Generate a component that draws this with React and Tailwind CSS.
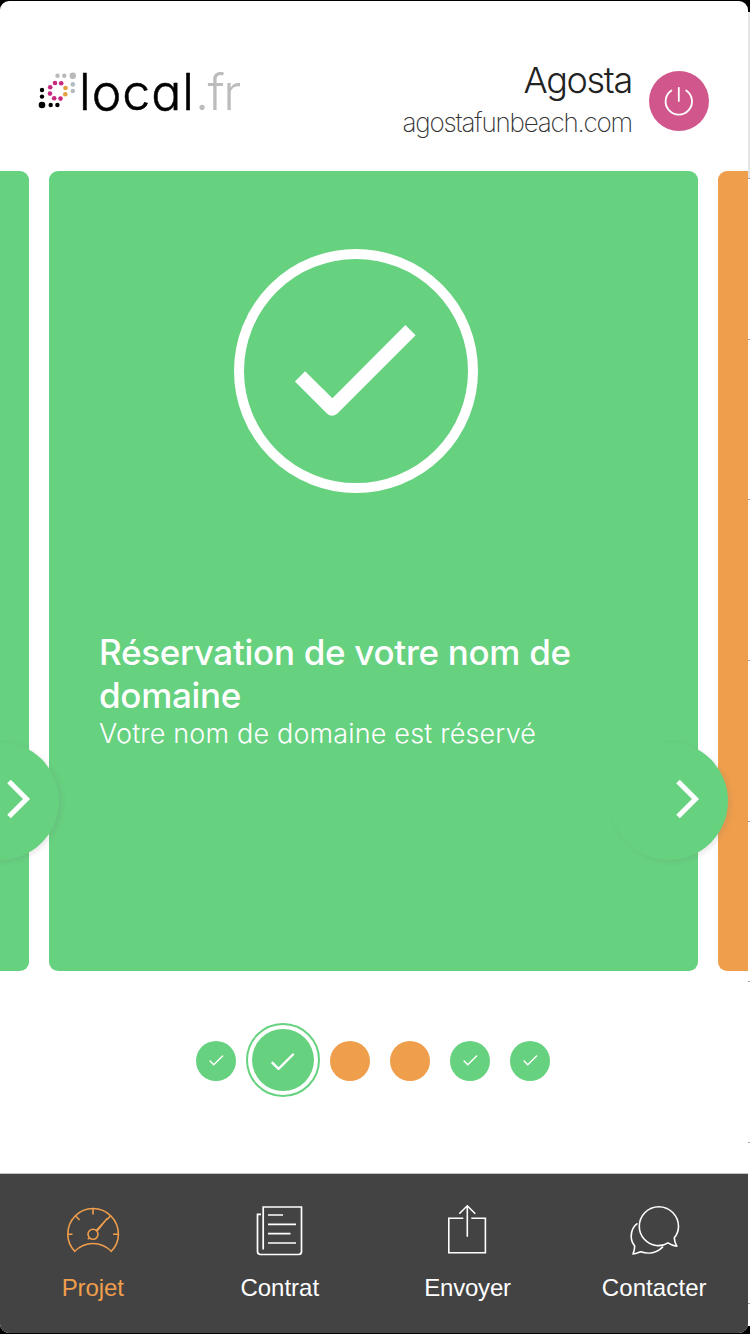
import React, { useState } from 'react';

const steps = [
  { id: 1, done: true },
  { id: 2, done: true },
  { id: 3, done: false },
  { id: 4, done: false },
  { id: 5, done: true },
  { id: 6, done: true },
];

const logoDots = [
  { x: 57.5, y: 75.7, r: 2.2, color: '#b9b9b9' },
  { x: 64.3, y: 75.7, r: 2.2, color: '#b9b9b9' },
  { x: 72.8, y: 75.7, r: 3.2, color: '#b9b9b9' },
  { x: 72.8, y: 84.4, r: 2.3, color: '#b4bcc4' },
  { x: 72.8, y: 91, r: 2.3, color: '#b4bcc4' },
  { x: 55, y: 83, r: 2.3, color: '#c9287f' },
  { x: 61.2, y: 83.2, r: 2.3, color: '#c9287f' },
  { x: 50.2, y: 87.3, r: 2.3, color: '#c9287f' },
  { x: 50, y: 93.6, r: 2.3, color: '#c9287f' },
  { x: 54.2, y: 98.3, r: 2.3, color: '#c9287f' },
  { x: 60.5, y: 98.6, r: 2.3, color: '#c9287f' },
  { x: 65.5, y: 88, r: 2.3, color: '#e3a03c' },
  { x: 65.3, y: 94.3, r: 2.3, color: '#e3a03c' },
  { x: 42, y: 90, r: 2.2, color: '#000' },
  { x: 42, y: 96.6, r: 2.2, color: '#000' },
  { x: 42, y: 105, r: 3.3, color: '#000' },
  { x: 50.7, y: 105, r: 2.2, color: '#000' },
  { x: 57.4, y: 105, r: 2.2, color: '#000' },
];

function Logo() {
  return (
    <div className="flex items-start">
      <svg viewBox="38 70 38 40" className="mt-[69px] h-10 w-[38px]">
        {logoDots.map((d, i) => (
          <circle key={i} cx={d.x} cy={d.y} r={d.r} fill={d.color} />
        ))}
      </svg>
      <div className="mt-[61px] ml-[3px] font-['Inter',sans-serif] text-[50px] leading-[60px] font-light tracking-[1px] whitespace-nowrap text-black [font-feature-settings:'cv11'] [-webkit-text-stroke:0.5px]">
        local<span className="tracking-[-1.6px] text-[#bcbcbc] [-webkit-text-stroke:0px]">.fr</span>
      </div>
    </div>
  );
}

function PowerIcon() {
  return (
    <svg viewBox="0 0 60 60" className="h-full w-full" fill="none" stroke="#fff" strokeWidth="1.8" strokeLinecap="round">
      <path d="M22.4 19.5A13.2 13.2 0 1 0 37.2 19.5" />
      <path d="M29.8 16.8V30" />
    </svg>
  );
}

function Header() {
  return (
    <header className="flex h-[170px] shrink-0 justify-between pr-[39px] pl-[38px]">
      <Logo />
      <div className="flex">
        <div className="pt-[57px] text-right font-['Inter',sans-serif]">
          <h1 className="text-[36px] leading-[44px] font-light tracking-[-1.3px] text-[#222]">Agosta</h1>
          <p className="text-[26px] leading-[42px] font-extralight tracking-[-1.2px] text-[#333]">agostafunbeach.com</p>
        </div>
        <button className="mt-[70px] ml-[17px] h-[60px] w-[60px] rounded-full bg-[#d1568c]">
          <PowerIcon />
        </button>
      </div>
    </header>
  );
}

function NextButton() {
  return (
    <button className="absolute top-[571px] -right-[30px] h-[118px] w-[118px] rounded-full bg-[#66d17f] shadow-[3px_2px_4px_rgba(110,110,110,0.14)]">
      <svg viewBox="0 0 118 118" className="h-full w-full" fill="none" stroke="#fff" strokeWidth="5">
        <path d="M68 39.5L85.5 57L68 74.5" />
      </svg>
    </button>
  );
}

function Cards() {
  return (
    <div className="flex h-[800px] shrink-0 gap-5">
      <div className="relative z-20 w-[29px] shrink-0 rounded-r-[9px] bg-[#66d17f]">
        <NextButton />
      </div>
      <section className="relative z-10 w-[649px] shrink-0 rounded-[9px] bg-[#66d17f] pt-[78px] pr-[86px] pl-[51px] text-white">
        <div className="mx-auto h-[244px] w-[244px] rounded-full border-[10px] border-white">
          <svg viewBox="0 0 224 224" className="h-full w-full" fill="none" stroke="#fff" strokeWidth="14.5" strokeLinejoin="round">
            <path d="M56 117.3L88.3 149.5L166.5 71.2" />
          </svg>
        </div>
        <div className="mt-[138px] -ml-px whitespace-nowrap font-['Inter',sans-serif]">
          <h2 className="text-[35px] leading-[43px] font-medium tracking-[-0.3px]">
            Réservation de votre nom de
            <br />
            domaine
          </h2>
          <p className="mt-[-1px] text-[27px] leading-[36px] font-light tracking-[0.16px]">Votre nom de domaine est réservé</p>
        </div>
        <NextButton />
      </section>
      <div className="w-[30px] shrink-0 rounded-l-[9px] bg-[#ef9e4c]" />
    </div>
  );
}

function Check({ className }) {
  return (
    <svg viewBox="0 0 24 18" className={className} fill="none" stroke="#fff" strokeWidth="2.4" strokeLinecap="round" strokeLinejoin="round">
      <path d="M1.5 9.8L7.5 15.8L22 1.5" />
    </svg>
  );
}

function Pagination({ current }) {
  return (
    <div className="flex h-[178px] shrink-0 items-center justify-center gap-5 pr-0.5">
      {steps.map(step => {
        const color = step.done ? 'bg-[#66d17f]' : 'bg-[#ef9e4c]';
        if (step.id === current) {
          return (
            <div key={step.id} className="-mx-2.5 flex h-[74px] w-[74px] items-center justify-center rounded-full border-2 border-[#66d17f]">
              <span className={`flex h-[62px] w-[62px] items-center justify-center rounded-full ${color}`}>
                <Check className="mt-1 h-[18px] w-6" />
              </span>
            </div>
          );
        }
        return (
          <span key={step.id} className={`mt-px flex h-10 w-10 items-center justify-center rounded-full ${color}`}>
            {step.done && <Check className="h-[11px] w-[15px]" />}
          </span>
        );
      })}
    </div>
  );
}

function ProjectIcon() {
  return (
    <svg viewBox="0 0 60 60" className="h-[60px] w-[60px]" fill="none" stroke="currentColor" strokeWidth="1.6">
      <path d="M11.7 51.3C7.2 46.6 4.8 41 4.8 34.3C4.8 20 16 8.5 30 8.5S55.4 20 55.4 34.3C55.4 41 53 46.6 48.3 51.3C38 40.8 22 40.8 11.7 51.3Z" />
      <path d="M30 8.5V14.5M12.5 16L16.7 20M47.5 16L44 19.5M4.8 34.3H9.5M55.4 34.3H50" />
      <circle cx="30" cy="34.3" r="5" />
      <path d="M33.2 30.4L44.2 18.5L34.2 31.2M26.3 37.8L24.8 39.3" strokeWidth="1.3" />
    </svg>
  );
}

function ContractIcon() {
  return (
    <svg viewBox="0 0 60 60" className="h-[60px] w-[60px]" fill="none" stroke="currentColor" strokeWidth="1.7">
      <path d="M13.2 49.5V7H51.5V51.5Q51.5 54.5 48.5 54.5H10.5Q7.5 54.5 7.5 51.5V14.3H11" />
      <path d="M18 15H33M18 24.3H46M18 33.7H40.5M18 43H46" />
    </svg>
  );
}

function SendIcon() {
  return (
    <svg viewBox="-0.8 0 60 60" className="h-[60px] w-[60px]" fill="none" stroke="currentColor" strokeWidth="1.6">
      <path d="M25.5 18.3H11V52.7H47.6V18.3H33.5" />
      <path d="M29.5 36.7V5.5M21.5 13.8L29.5 5.8L37.5 13.8" />
    </svg>
  );
}

function ContactIcon() {
  return (
    <svg viewBox="1.5 0 60 60" className="h-[60px] w-[60px]" fill="none" stroke="currentColor" strokeWidth="1.6" strokeLinejoin="round">
      <path d="M54.3 46.2C50.5 45.8 48 44.5 45.5 42.8C41.5 45.4 37.5 46 33.8 45.5C24 44 16.8 36 16.8 26.5C16.8 15.5 25.5 6.7 36.3 6.7S56 15.5 56 26.5C56 31 54.5 34.5 51.8 37.8C51.8 41 52.8 43.5 54.3 46.2Z" />
      <path d="M15 23.3C11 26 8.7 31 8.7 36.3C8.7 40 10 43.3 12.2 46C12.2 49 11.5 51.5 10.5 54C14 53.8 16 52.8 18.3 51.7C26 54.5 34.5 53 40.5 46.6" />
    </svg>
  );
}

const tabs = [
  { id: 'projet', label: 'Projet', icon: ProjectIcon, spacing: 'tracking-[-0.1px]' },
  { id: 'contrat', label: 'Contrat', icon: ContractIcon, spacing: 'tracking-normal' },
  { id: 'envoyer', label: 'Envoyer', icon: SendIcon, spacing: 'tracking-[-0.2px] pl-[1.5px]' },
  { id: 'contacter', label: 'Contacter', icon: ContactIcon, spacing: 'tracking-[0.1px] pl-px' },
];

function TabBar() {
  const [active, setActive] = useState('projet');

  return (
    <nav className="flex min-h-0 flex-1 border-t border-[#c4c4c4] bg-[#434343]">
      {tabs.map(({ id, label, icon: Icon, spacing }) => (
        <button
          key={id}
          onClick={() => setActive(id)}
          className={`flex w-[187px] flex-col items-center pt-[26px] pr-[1.5px] ${active === id ? 'text-[#ef9e4c]' : 'text-white'}`}
        >
          <Icon />
          <span className={`mt-3 font-['Liberation_Sans',sans-serif] text-[24px] leading-[32px] ${spacing}`}>{label}</span>
        </button>
      ))}
    </nav>
  );
}

export default function App() {
  return (
    <div className="flex h-[1334px] w-[750px] overflow-hidden bg-black">
      <div className="my-px flex w-[748px] shrink-0 flex-col overflow-hidden rounded-[9px] bg-white">
        <Header />
        <Cards />
        <Pagination current={2} />
        {/* spacer before the bottom navigation */}
        <div className="h-6 shrink-0" />
        <TabBar />
      </div>
      <div className="mt-3 mb-2 w-0.5 overflow-hidden bg-white">
        <div className="h-[166px] bg-[#e5e5e5]" />
        {[1, 2, 3, 4, 5, 6, 7, 8].map(n => (
          <div key={n} className="h-[160.7px] border-t border-[#a5a5a5]" />
        ))}
      </div>
    </div>
  );
}
